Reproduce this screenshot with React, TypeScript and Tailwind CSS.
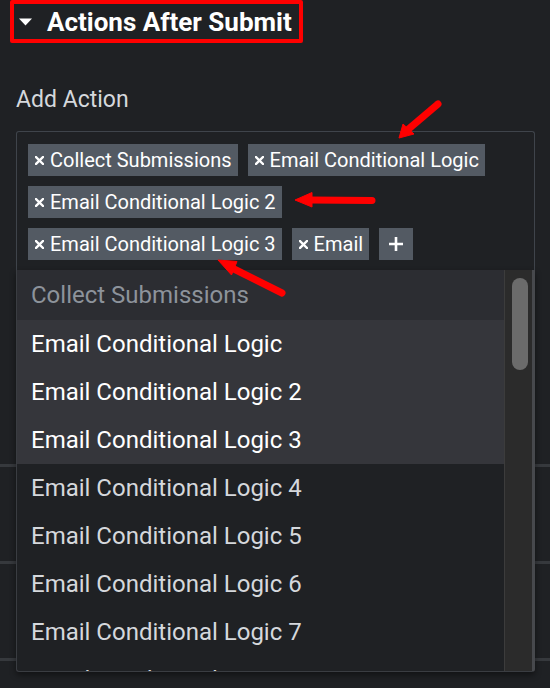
import React from 'react';

const selected = [
  'Collect Submissions',
  'Email Conditional Logic',
  'Email Conditional Logic 2',
  'Email Conditional Logic 3',
  'Email',
];

const options = [
  { label: 'Collect Submissions', state: 'used' },
  { label: 'Email Conditional Logic', state: 'active' },
  { label: 'Email Conditional Logic 2', state: 'active' },
  { label: 'Email Conditional Logic 3', state: 'active' },
  { label: 'Email Conditional Logic 4', state: 'idle' },
  { label: 'Email Conditional Logic 5', state: 'idle' },
  { label: 'Email Conditional Logic 6', state: 'idle' },
  { label: 'Email Conditional Logic 7', state: 'idle' },
  { label: 'Email Conditional Logic 8', state: 'idle' },
];

const XMark = () => (
  <svg width="9" height="9" viewBox="0 0 9 9" className="shrink-0">
    <path d="M1 1L8 8M8 1L1 8" stroke="#fff" strokeWidth="2.4" strokeLinecap="square" />
  </svg>
);

const Tag = ({ label }: { label: string }) => (
  <div className="flex h-8 items-center gap-[6px] bg-[#535a63] pl-[7px] pr-[6px] text-[20px] leading-8 text-white">
    <XMark />
    <span>{label}</span>
  </div>
);

// red annotation arrows drawn over the screenshot
const Arrows = () => (
  <svg width="550" height="688" className="pointer-events-none absolute left-0 top-0 z-20">
    <g fill="#ff0000" stroke="#ff0000">
      <line x1="438" y1="104" x2="408" y2="129.5" strokeWidth="7" strokeLinecap="round" />
      <polygon points="399,138 403,124 414,134" strokeWidth="1" />
      <line x1="372" y1="200.5" x2="310" y2="200" strokeWidth="7" strokeLinecap="round" />
      <polygon points="295,200 312,192.5 312,207" strokeWidth="1" />
      <line x1="282" y1="293" x2="230" y2="267" strokeWidth="7" strokeLinecap="round" />
      <polygon points="218,260 237,261.5 231.5,275" strokeWidth="1" />
    </g>
  </svg>
);

export default function App() {
  return (
    <div className="relative min-h-screen w-full overflow-hidden bg-[#1f2124] font-['Roboto',sans-serif]">
      <div className="pl-[10px]">
        <div className="flex h-[43px] w-[293px] items-center gap-[14px] rounded-[2px] border-4 border-[#ff0000] pl-[4px]">
          <svg width="15" height="8" viewBox="0 0 15 8">
            <polygon points="1,0.5 14,0.5 7.5,7.5" fill="#fff" />
          </svg>
          <span className="text-[26px] font-bold leading-none text-white">Actions After Submit</span>
        </div>
      </div>

      <div className="mt-[43px] pl-4 text-[23px] leading-[28px] text-[#d5d8dc]">Add Action</div>

      <div className="relative ml-4 mt-[17px] w-[519px]">
        <div className="flex flex-wrap gap-[10px] rounded-t-[3px] border border-b-0 border-[#3f444b] pb-[10px] pl-[11px] pr-4 pt-3">
          {selected.map((s) => (
            <Tag key={s} label={s} />
          ))}
          <div className="flex h-8 w-[34px] items-center justify-center bg-[#535a63]">
            <svg width="16" height="16" viewBox="0 0 16 16">
              <path d="M8 1V15M1 8H15" stroke="#fff" strokeWidth="2.6" />
            </svg>
          </div>
        </div>

        <div className="absolute left-0 top-full z-10 flex h-[402px] w-full overflow-hidden rounded-b-[3px] border-l border-r-[3px] border-b border-l-[#3a3d42] border-r-[#47494d] border-b-[#3a3d42] bg-[#1f2124] shadow-[0_3px_6px_rgba(0,0,0,0.45)]">
          <div className="flex-1">
            {options.map((o, i) => (
              <div
                key={o.label}
                className={
                  'flex items-center pl-[14px] text-[24px] ' +
                  (i === 0 ? 'h-[50px] ' : 'h-12 ') +
                  (o.state === 'used'
                    ? 'bg-[#2c2d32] text-[#8d939b]'
                    : o.state === 'active'
                    ? 'bg-[#35363b] text-white'
                    : 'text-[#d5d8dc]')
                }
              >
                {o.label}
              </div>
            ))}
          </div>
          <div className="w-[28px] shrink-0 border-l border-[#3c3c3c] bg-[#2b2b2b] pl-[7px] pt-2">
            <div className="h-[92px] w-4 rounded-full bg-[#6b6b6b]" />
          </div>
        </div>
      </div>

      <div className="h-[194px]" />
      <div className="h-[3px] bg-[#36393d]" />
      <div className="h-[94px]" />
      <div className="h-[3px] bg-[#36393d]" />
      <div className="h-[94px]" />
      <div className="h-[3px] bg-[#36393d]" />
      <div className="h-[30px]" />

      <Arrows />
    </div>
  );
}
